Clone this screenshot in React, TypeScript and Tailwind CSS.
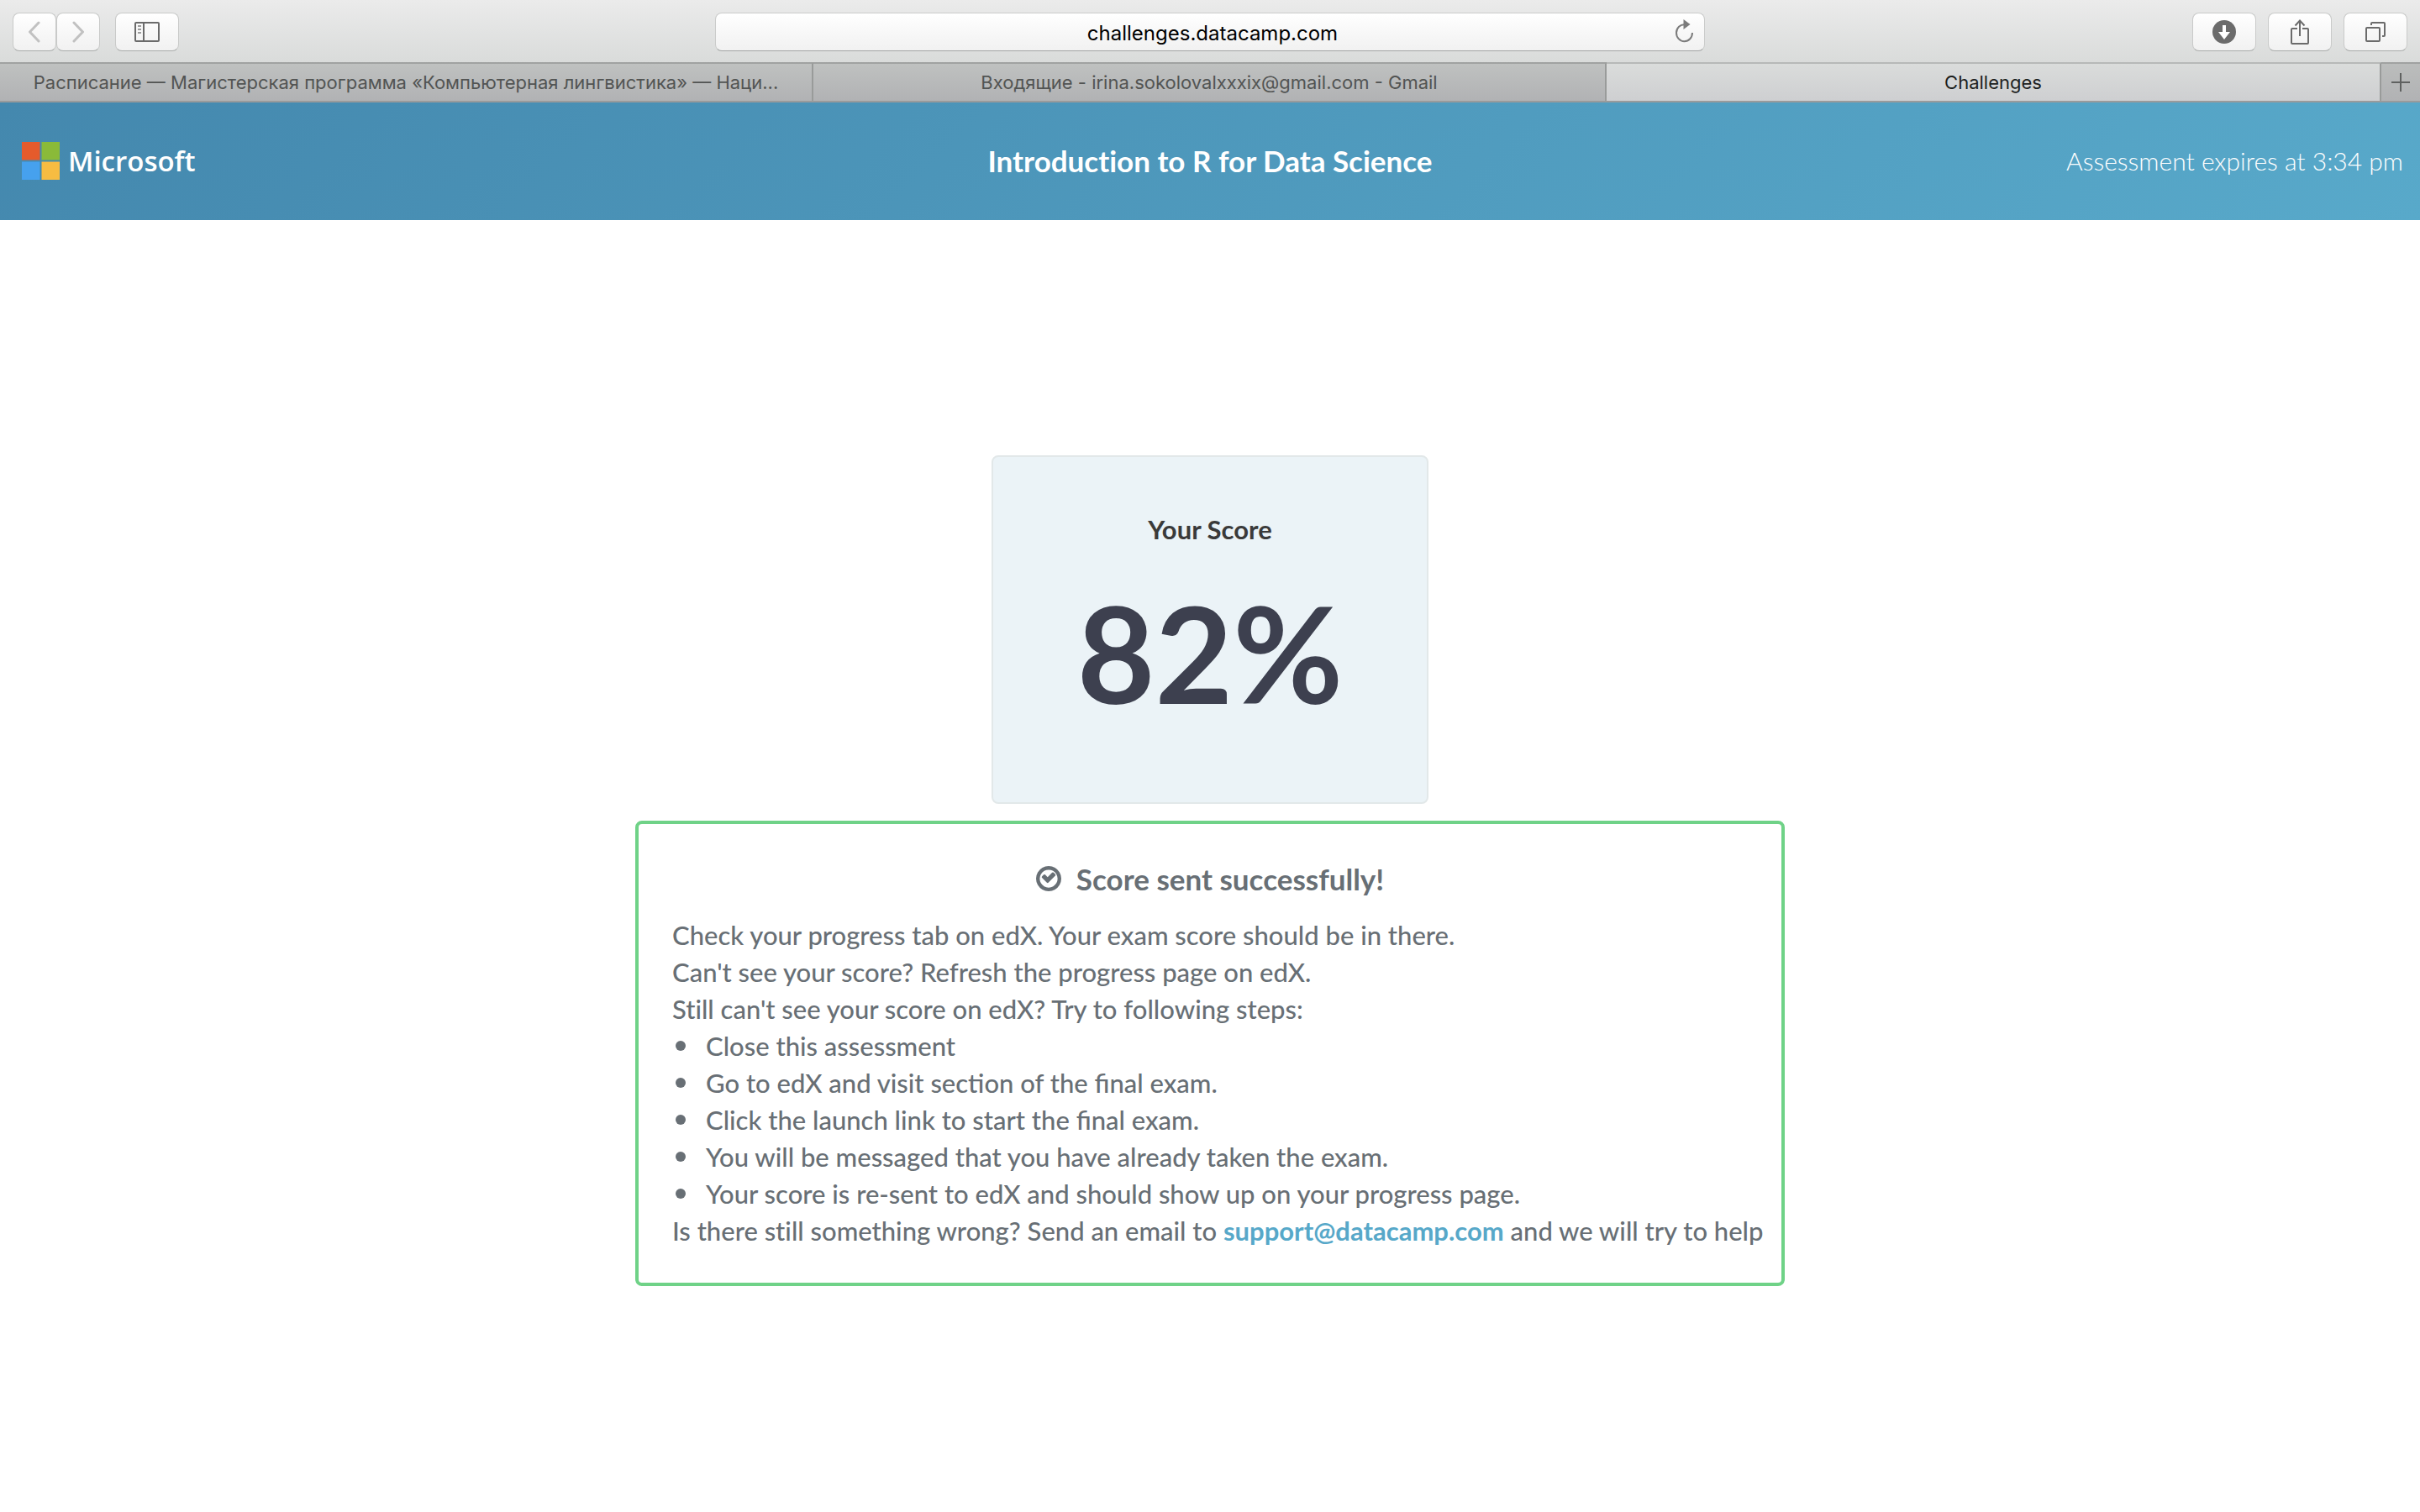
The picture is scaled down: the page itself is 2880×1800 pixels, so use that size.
import type { ReactNode } from "react";

const buttonBase =
  "flex h-[46px] items-center justify-center rounded-lg border border-[#c9cac9] border-b-[#a9abaa] bg-linear-to-b from-white to-[#f1f1f1]";

function ToolButton({ label, narrow, children }: { label: string; narrow?: boolean; children: ReactNode }) {
  return (
    <button type="button" aria-label={label} className={`${buttonBase} ${narrow ? "w-[52px]" : "w-[76px]"}`}>
      {children}
    </button>
  );
}

function Toolbar() {
  return (
    <div className="grid h-[76px] grid-cols-[1fr_1178px_1fr] items-center bg-linear-to-b from-[#ebebeb] to-[#d9dbda] px-[15px]">
      <div className="flex gap-[18px]">
        <div className="flex">
          <ToolButton label="Back" narrow>
            <svg width="16" height="26" viewBox="0 0 16 26" fill="none" stroke="#c1c1c1" strokeWidth="3" strokeLinecap="round" strokeLinejoin="round">
              <path d="M13 2 2.500 13 13 24" />
            </svg>
          </ToolButton>
          <ToolButton label="Forward" narrow>
            <svg width="16" height="26" viewBox="0 0 16 26" fill="none" stroke="#c1c1c1" strokeWidth="3" strokeLinecap="round" strokeLinejoin="round">
              <path d="M3 2 13.500 13 3 24" />
            </svg>
          </ToolButton>
        </div>
        <ToolButton label="Show sidebar">
          <svg width="30" height="24" viewBox="0 0 30 24" fill="none">
            <rect x="1" y="1" width="28" height="22" rx="1" stroke="#6b6b6b" strokeWidth="2" />
            <path d="M11 1v22" stroke="#6b6b6b" strokeWidth="2" />
            <path d="M4 5h4M4 9h4M4 13h4" stroke="#9b9b9b" strokeWidth="2" />
          </svg>
        </ToolButton>
      </div>
      <div className="relative">
        <input
          type="text"
          aria-label="Address"
          defaultValue="challenges.datacamp.com"
          className="h-[46px] w-full rounded-lg border border-[#cbcccb] border-b-[#a2a4a3] bg-linear-to-b from-white to-[#f1f1f1] pt-0.5 pl-1.5 text-center text-[24px] text-black"
        />
        <button type="button" aria-label="Reload" className="absolute top-2 right-3">
          <svg width="24" height="28" viewBox="0 0 24 28" fill="none">
            <path d="M12 6.200A9.500 10 0 1 0 21 16" stroke="#7b7b7b" strokeWidth="2" />
            <path d="M10.500 0v12l8-6z" fill="#7b7b7b" />
          </svg>
        </button>
      </div>
      <div className="flex justify-end gap-[14px]">
        <ToolButton label="Downloads">
          <svg width="28" height="28" viewBox="0 0 28 28">
            <circle cx="14" cy="14" r="14" fill="#6b6b6b" />
            <path d="M12 6h4v8h5l-7 9-7-9h5z" fill="#fff" />
          </svg>
        </ToolButton>
        <ToolButton label="Share">
          <svg width="24" height="32" viewBox="0 0 24 32" fill="none" stroke="#6b6b6b" strokeWidth="2">
            <path d="M9 12H3a1 1 0 0 0-1 1v16a1 1 0 0 0 1 1h18a1 1 0 0 0 1-1V13a1 1 0 0 0-1-1h-6" />
            <path d="M12 21V3M6.500 8.500 12 2.500l5.500 6" />
          </svg>
        </ToolButton>
        <ToolButton label="Show all tabs">
          <svg width="24" height="24" viewBox="0 0 24 24" fill="none" stroke="#6b6b6b" strokeWidth="2">
            <rect x="1" y="7" width="16" height="16" rx="1" />
            <path d="M7 4V2a1 1 0 0 1 1-1h14a1 1 0 0 1 1 1v14a1 1 0 0 1-1 1h-2" />
          </svg>
        </ToolButton>
      </div>
    </div>
  );
}

const tabBase = "truncate border-t-2 border-r-2 border-b-2 border-r-[#999b9a] border-b-[#999a9b] text-center text-[22px] leading-[44px]";
const idleTab = "border-t-[#a0a2a1] bg-linear-to-b from-[#bfc1c0] to-[#b1b2b4] text-[#525453]";

function TabBar() {
  return (
    <div role="tablist" className="grid h-12 -mt-0.5 grid-cols-[968fr_944fr_922fr_46px]">
      <button type="button" role="tab" aria-selected="false" className={`${tabBase} ${idleTab}`}>
        Расписание — Магистерская программа «Компьютерная лингвистика» — Наци...
      </button>
      <button type="button" role="tab" aria-selected="false" className={`${tabBase} ${idleTab}`}>
        Входящие - irina.sokolovalxxxix@gmail.com - Gmail
      </button>
      <button
        type="button"
        role="tab"
        aria-selected="true"
        className={`${tabBase} border-t-[#b7b9b8] bg-linear-to-b from-[#dadcdb] to-[#cecfd1] text-[#1d1f1e]`}
      >
        Challenges
      </button>
      <button
        type="button"
        aria-label="New tab"
        className="flex items-center justify-center border-y-2 border-t-[#a0a2a1] border-b-[#999a9b] bg-linear-to-b from-[#bbbdbc] to-[#b1b2b4]"
      >
        <svg width="22" height="22" viewBox="0 0 22 22" stroke="#5f6160" strokeWidth="2">
          <path d="M11 0v22M0 11h22" />
        </svg>
      </button>
    </div>
  );
}

function PageHeader() {
  return (
    <header className="grid h-[140px] grid-cols-[1fr_auto_1fr] items-center bg-[linear-gradient(135deg,#4488ae,#58a9ca)] px-5 pb-0.5 text-white">
      <div className="flex items-center gap-[10px] pl-1.5">
        <svg width="45" height="45" viewBox="0 0 45 45" aria-hidden="true">
          <rect width="21.500" height="21.500" fill="#e55b2c" />
          <rect x="23.500" width="21.500" height="21.500" fill="#8aba39" />
          <rect y="23.500" width="21.500" height="21.500" fill="#46a1ee" />
          <rect x="23.500" y="23.500" width="21.500" height="21.500" fill="#f7bc42" />
        </svg>
        <span className="font-['Open_Sans'] text-[33px] leading-[45px] font-semibold">Microsoft</span>
      </div>
      <h1 className="text-[35px] font-bold [font-variant-ligatures:none]">Introduction to R for Data Science</h1>
      <p className="text-right text-[30px] font-light">Assessment expires at 3:34 pm</p>
    </header>
  );
}

const steps = [
  "Close this assessment",
  "Go to edX and visit section of the final exam.",
  "Click the launch link to start the final exam.",
  "You will be messaged that you have already taken the exam.",
  "Your score is re-sent to edX and should show up on your progress page.",
];

function ScoreCard() {
  return (
    <section className="flex h-[415px] w-[520px] flex-col items-center rounded-lg border-2 border-[#e2e8e9] bg-[#ebf3f7] pt-16">
      <h2 className="text-[31px] leading-[44px] font-bold text-[#3a3a3a]">Your Score</h2>
      <p className="mt-9 text-[160px] leading-[176px] font-bold text-[#3d404f]">82%</p>
    </section>
  );
}

function ResultNotice() {
  return (
    <section className="mt-5 w-full max-w-[1368px] rounded-lg border-4 border-[#6fd287] pt-10 pr-5 pb-10 pl-10 text-[31px] leading-[44px] font-medium text-[#686f75]">
      <h2 className="mb-5 flex items-center justify-center gap-[18px] pr-5 text-[35px] leading-[50px] font-bold">
        <svg width="30" height="30" viewBox="0 128 1536 1536" fill="currentColor" aria-hidden="true">
          <path d="M1171 723l-422 422q-19 19-45 19t-45-19l-294-294q-19-19-19-45t19-45l102-102q19-19 45-19t45 19l147 147 275-275q19-19 45-19t45 19l102 102q19 19 19 45t-19 45zM1312 896q0-148-73-273t-198-198-273-73-273 73-198 198-73 273 73 273 198 198 273 73 273-73 198-198 73-273zM1536 896q0 209-103 385.500t-279.500 279.500-385.500 103-385.500-103-279.500-279.500-103-385.500 103-385.500 279.500-279.500 385.500-103 385.500 103 279.500 279.500 103 385.500z" />
        </svg>
        Score sent successfully!
      </h2>
      <div className="[font-variant-ligatures:none]">
        <p>Check your progress tab on edX. Your exam score should be in there.</p>
        <p>Can't see your score? Refresh the progress page on edX.</p>
        <p>Still can't see your score on edX? Try to following steps:</p>
      </div>
      <ul>
        {steps.map((step) => (
          <li key={step} className="flex items-center gap-6 pl-1">
            <span className="size-3 rounded-full bg-[#686f75]" />
            {step}
          </li>
        ))}
      </ul>
      <p className="[font-variant-ligatures:none]">
        Is there still something wrong? Send an email to{" "}
        <a href="mailto:support@datacamp.com" className="font-bold text-[#57a8c9]">
          support@datacamp.com
        </a>{" "}
        and we will try to help
      </p>
    </section>
  );
}

export default function App() {
  return (
    <div className="min-h-screen bg-white font-['Lato',sans-serif]">
      <div className="font-['Inter',sans-serif]">
        <Toolbar />
        <TabBar />
      </div>
      <PageHeader />
      <main className="flex flex-col items-center pt-[280px]">
        <ScoreCard />
        <ResultNotice />
      </main>
    </div>
  );
}
